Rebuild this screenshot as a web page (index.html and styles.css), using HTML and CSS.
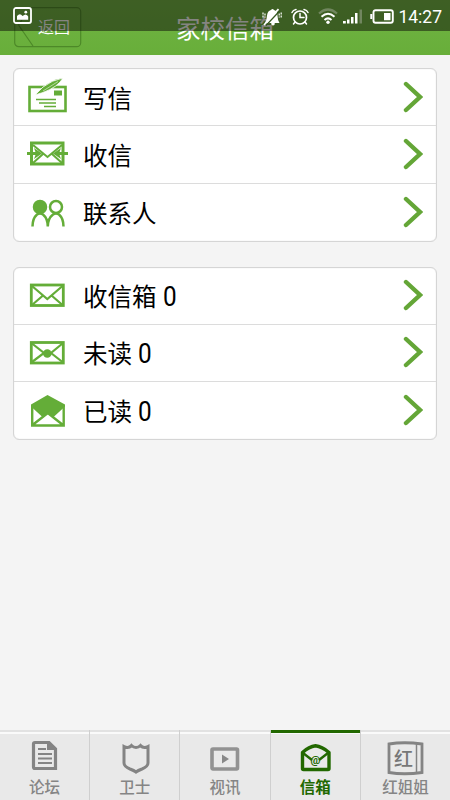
FILE: index.html
```html
<!DOCTYPE html>
<html lang="zh-CN">
<head>
<meta charset="utf-8">
<title>家校信箱</title>
<link rel="stylesheet" href="styles.css">
</head>
<body>
<svg class="defs" width="0" height="0">
  <symbol id="chevron" viewBox="0 0 20 32"><path d="M3 3 17 16 3 29" fill="none" stroke="#64a637" stroke-width="4.400" stroke-linecap="round" stroke-linejoin="miter"/></symbol>
</svg>
<div class="app">
  <header class="header">
    <div class="back">
      <svg class="back-shape" width="68" height="41" viewBox="0 0 68 41"><rect x=".7" y=".7" width="66" height="39" rx="4"/><path d="M4.500 18 19 39M4.500 18 8 13"/></svg>
      <span>返回</span>
    </div>
    <h1 class="title">家校信箱</h1>
  </header>

  <div class="status">
    <svg class="photo" width="19" height="17" viewBox="0 0 19 17"><rect x="1" y="1" width="17" height="15" rx="2" fill="none" stroke="#fff" stroke-width="1.800"/><path d="M4 12.800V9q3-3.500 5.500 0 2-1.500 3-1.500 2 .5 2.700 2v3.300z" fill="#fff"/><circle cx="12.800" cy="5.200" r="1.400" fill="#fff"/></svg>
    <svg class="mute" width="20" height="18" viewBox="0 0 20 18"><path d="M3 15Q4.800 12 5 7.500 5.500 2.800 9 2q1.500-2 3 0 3.500 1 3.500 6 .2 4.500 2 7z" fill="#fff"/><circle cx="11" cy="15.800" r="1.800" fill="#fff"/><path d="M4 17.500 18 2.500" stroke="#365821" stroke-width="1.300"/><path d="M2 17 16.500 1.200" stroke="#fff" stroke-width="1.800"/><path d="M1 4.500v6M3 5.500v4M17.200 5.500v4M19.200 4.500v6" stroke="#fff" stroke-width="1.200" stroke-dasharray="2 1"/></svg>
    <svg class="alarm" width="20" height="18" viewBox="0 0 20 18"><circle cx="10" cy="9.500" r="6.500" fill="none" stroke="#fff" stroke-width="1.700"/><path d="M10 5.500v4h4M2 4.500q1-2.500 4-3M18 4.500q-1-2.500-4-3M5 14l-1.500 2M15 14l1.500 2" fill="none" stroke="#fff" stroke-width="1.500" stroke-linecap="round"/></svg>
    <svg class="wifi" width="20" height="17" viewBox="0 0 20 17"><path d="M1 5.500Q10-2.500 19 5.500" stroke="#71865f" stroke-width="2.200" fill="none"/><path d="M3.500 8.800q6.500-6 13 0M6.500 12q3.500-3.300 7 0" stroke="#fff" stroke-width="2" fill="none"/><circle cx="10" cy="14.200" r="1.700" fill="#fff"/></svg>
    <svg class="signal" width="22" height="15" viewBox="0 0 22 15"><path d="M1 12h2.800v2.500H1zM5 10.500h2.500v4H5zM9 8h2.500v6.500H9zM13 4h2.500v10.500H13z" fill="#fff"/><path d="M17.500.5H20v14h-2.500z" fill="#71865f"/></svg>
    <svg class="battery" width="24" height="15" viewBox="0 0 24 15"><rect x="3.500" y="1.200" width="19.300" height="12.600" rx="2" fill="none" stroke="#fff" stroke-width="1.900"/><path d="M.3 5h2v5h-2zM14 4h6.500v7.300H14z" fill="#fff"/></svg>
    <span class="clock">14:27</span>
  </div>

  <main class="content">
    <section class="card">
      <div class="row">
        <svg class="icon raised" width="44" height="44" viewBox="0 0 44 44"><rect x="4.500" y="14" width="36" height="24" fill="none" stroke="#64ad38" stroke-width="2.600"/><path d="M29 17.500h8v5h-8z" fill="#64ad38"/><path d="M11 26.500h20M14 30h17M19 33.500h12" stroke="#64ad38" stroke-width="1.500"/><path d="M10 22 18 14Q27 7 38 5 33 14 18 19.500z" fill="#64ad38" stroke="#fff" stroke-width=".8"/><path d="M18 18 33 8.500" stroke="#d5ebc7" stroke-width=".7"/></svg>
        <span class="label">写信</span><svg class="go" width="20" height="32"><use href="#chevron"/></svg>
      </div>
      <div class="row">
        <svg class="icon" width="44" height="44" viewBox="0 0 44 44"><rect x="6.500" y="11" width="31.500" height="21" fill="none" stroke="#64ad38" stroke-width="3"/><path d="m8 13 14.500 12L37 13M8 31l10-9M37 31l-10-9" fill="none" stroke="#64ad38" stroke-width="2"/><path d="M2 21.500h11M43 21.500H32" stroke="#64ad38" stroke-width="3"/><path d="m9 16 8 5.500-8 5.500 2-5.500zM36 16l-8 5.500 8 5.500-2-5.500z" fill="#64ad38"/></svg>
        <span class="label">收信</span><svg class="go" width="20" height="32"><use href="#chevron"/></svg>
      </div>
      <div class="row">
        <svg class="icon" width="44" height="44" viewBox="0 0 44 44"><g fill="none" stroke="#64ad38" stroke-width="2.500"><circle cx="15" cy="17" r="6" fill="#64ad38"/><circle cx="31" cy="17" r="6"/><path d="M7.500 36.500q0-8 4.500-12 3-2 6 0 4.800 4 4.800 12q0-8 5.200-12 3-2 6 0 4.500 4 4.500 12"/></g></svg>
        <span class="label">联系人</span><svg class="go" width="20" height="32"><use href="#chevron"/></svg>
      </div>
    </section>
    <section class="card">
      <div class="row">
        <svg class="icon" width="44" height="44" viewBox="0 0 44 44"><rect x="6.300" y="11" width="32" height="20.500" fill="none" stroke="#64ad38" stroke-width="2.800"/><path d="m7 12 15.300 13L37.500 12M7 31l11-9.500M37.500 31l-11-9.500" fill="none" stroke="#64ad38" stroke-width="2.200"/></svg>
        <span class="label">收信箱 <b>0</b></span><svg class="go" width="20" height="32"><use href="#chevron"/></svg>
      </div>
      <div class="row">
        <svg class="icon" width="44" height="44" viewBox="0 0 44 44"><rect x="6.300" y="11.500" width="32" height="20.500" fill="none" stroke="#64ad38" stroke-width="2.800"/><path d="M7 12.500 19 22 7 31M37.500 12.500 26 22l11.500 9" fill="none" stroke="#64ad38" stroke-width="2.200"/><circle cx="22.300" cy="22.500" r="4.300" fill="#64ad38"/></svg>
        <span class="label">未读 <b>0</b></span><svg class="go" width="20" height="32"><use href="#chevron"/></svg>
      </div>
      <div class="row">
        <svg class="icon" width="44" height="44" viewBox="0 0 44 44"><path d="M6 15.500 22.500 6 40 15.500v2L28 28.500l-5-4-5 4L6 17.500z" fill="#64ad38"/><path d="M7.200 16v20.500h31.500V16M7.500 36l15.300-12L38 36" fill="none" stroke="#64ad38" stroke-width="2.400"/></svg>
        <span class="label">已读 <b>0</b></span><svg class="go" width="20" height="32"><use href="#chevron"/></svg>
      </div>
    </section>
  </main>

  <nav class="tabs">
    <div class="tab">
      <svg width="36" height="36" viewBox="0 0 36 36"><path d="M8 2.500h14l6.500 6.500v19.500H8Q6.500 28.500 6.500 27V4Q6.500 2.500 8 2.500z" fill="none" stroke="#848484" stroke-width="3.200"/><path d="M11 9h8M11 14h14M11 18.500h14M11 23h14" stroke="#848484" stroke-width="2.200"/><path d="M20 2v8h8z" fill="#848484"/></svg>
      <span>论坛</span>
    </div>
    <div class="tab">
      <svg width="36" height="36" viewBox="0 0 36 36"><path d="M7 6.500Q11.500 9 14.500 5.500q2 2 4.500 2t4.500-2Q26.500 9 31 6.500V23q0 3.500-6 6-4 1.500-6 3-2-1.500-6-3-6-2.500-6-6z" fill="none" stroke="#848484" stroke-width="3"/></svg>
      <span>卫士</span>
    </div>
    <div class="tab">
      <svg width="36" height="36" viewBox="0 0 36 36"><rect x="5" y="9" width="25.500" height="20" rx="1" fill="none" stroke="#929292" stroke-width="3.600"/><path d="m15 14.500 7 4.500-7 4.500z" fill="#888"/></svg>
      <span>视讯</span>
    </div>
    <div class="tab active">
      <svg width="36" height="36" viewBox="0 0 36 36"><path d="M5.500 12.500Q12 6.500 18.500 5.800 25 6.500 32 12.500v16q0 1-1 1H6.500q-1 0-1-1z" fill="none" stroke="#226800" stroke-width="3.400" stroke-linejoin="round"/><path d="m6 13 9 7M31 13l-9 7" stroke="#226800" stroke-width="2.400"/><text x="18.500" y="24" class="at">@</text></svg>
      <span>信箱</span>
    </div>
    <div class="tab">
      <svg class="book" width="38" height="36" viewBox="0 0 38 36"><path d="M3 4Q18 1.500 36 4v28.500Q18 35 3 32.500z" fill="none" stroke="#848484" stroke-width="2.800"/><path d="M30.500 3v29" stroke="#848484" stroke-width="1.500"/><text x="17.500" y="25.500" class="red">红</text></svg>
      <span>红姐姐</span>
    </div>
  </nav>
</div>
</body>
</html>
```
FILE: styles.css
```css
* { box-sizing: border-box; }
body { margin: 0; background: #f4f4f4; font-family: Roboto, "Noto Sans CJK SC", sans-serif; }
svg { display: block; flex: none; }
.defs { position: absolute; }
.app { position: relative; width: 450px; height: 800px; display: flex; flex-direction: column; overflow: hidden; }

.header { position: relative; height: 55px; flex: none; background: linear-gradient(#70b443, #68ae3a); display: flex; justify-content: center; }
.title { margin: 13px 0 0; font-size: 24.5px; line-height: 34px; font-weight: 400; color: #fff; }
.back { position: absolute; left: 14px; top: 7px; width: 68px; height: 41px; color: #fff; font-size: 16px; line-height: 41px; padding-left: 24px; }
.back-shape { position: absolute; left: 0; top: 0; fill: none; stroke: #4d8928; stroke-width: 1.2; }
.back span { color: #fff; }

.status { position: absolute; left: 0; top: 0; width: 450px; height: 31px; display: flex; align-items: center; padding: 2px 8px 0 13px; background: rgba(14, 14, 8, .51); }
.photo { margin-top: -3px; }
.mute { margin-left: 230px; }
.alarm { margin-left: 8px; }
.wifi { margin-left: 8px; }
.signal { margin-left: 4px; }
.battery { margin-left: 6px; }
.clock { margin-left: auto; color: #fff; font-size: 17.5px; line-height: 24px; }

.content { flex: 1; padding: 13px 13px 0; display: flex; flex-direction: column; gap: 25px; }
.card { height: 173.5px; display: flex; flex-direction: column; background: #fff; border: 1.5px solid #d5d5d5; border-radius: 6px; box-shadow: inset 0 0 1px #ccc; }
.row { flex: 1; display: flex; align-items: center; padding: 0 13px 0 11px; border-top: 1px solid #dcdcdc; }
.row:first-child { flex: 0 0 56px; border-top: 0; }
.raised { margin-top: -5px; }
.label { flex: 1; margin: 5px 0 0 14px; font-size: 24.5px; line-height: 34px; color: #000; }
.label b { display: inline-block; font-weight: 400; font-size: 27px; line-height: 1; transform: scaleX(.9); transform-origin: left; }
.go { margin-top: -1px; }

.tabs { height: 70px; flex: none; display: flex; background: linear-gradient(#e2e2e2 0 2px, #fafafa 2px 4px, #e9e9e9 4px); }
.tab { flex: 1; display: flex; flex-direction: column; align-items: center; padding-top: 10px; border-left: 1px solid #cfcfcf; color: #858585; font-size: 15.5px; font-weight: 500; line-height: 24px; }
.tab:first-child { border-left: 0; }
.active { color: #226800; font-weight: 700; box-shadow: inset 0 3px #226800; }
.at { font: 700 11px Roboto, sans-serif; text-anchor: middle; fill: #226800; }
.red { font: 500 19px "Noto Sans CJK SC", sans-serif; text-anchor: middle; fill: #777; }
```
